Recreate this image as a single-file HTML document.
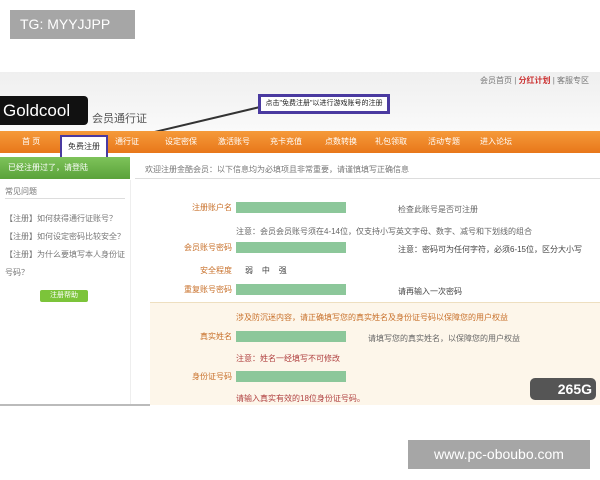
<!DOCTYPE html>
<html><head><meta charset="utf-8"><style>
*{margin:0;padding:0;box-sizing:border-box}
body{width:600px;height:480px;background:#fff;position:relative;overflow:hidden;font-family:"Liberation Sans","Noto Sans CJK SC",sans-serif;font-size:8px;color:#666}
.a{position:absolute;white-space:nowrap}
.g{position:absolute;background:#8cc79a;height:11px;width:110px}
.lab{position:absolute;color:#c8702a;font-size:8px;text-align:right;width:80px}
</style></head><body>
<div class="a" style="left:10px;top:10px;width:125px;height:29px;background:#a6a6a6;color:#fff;font-size:14px;line-height:29px;padding-left:10px">TG: MYYJJPP</div>
<div class="a" style="left:0;top:72px;width:600px;height:60px;background:linear-gradient(#efefef,#fafafa)"></div>
<div class="a" style="left:480px;top:75px;color:#777">会员首页 | <span style="color:#c33;font-weight:bold">分红计划</span> | 客服专区</div>
<div class="a" style="left:0;top:96px;width:88px;height:29px;background:#111;border-radius:0 4px 4px 0;color:#fff;font-size:17px;line-height:29px;padding-left:3px">Goldcool</div>
<div class="a" style="left:92px;top:110px;font-size:11px;color:#555">会员通行证</div>
<svg class="a" style="left:95px;top:105px" width="170" height="45"><line x1="165" y1="2" x2="30" y2="34" stroke="#333" stroke-width="2"/><polygon points="18,40 38,28 36,38" fill="#5a3ab0"/></svg>
<div class="a" style="left:258px;top:94px;width:132px;height:20px;background:#fff;border:3px solid #4a3aa0;font-size:7px;line-height:14px;color:#222;text-align:center;overflow:hidden">点击"免费注册"以进行游戏账号的注册</div>
<div class="a" style="left:0;top:131px;width:600px;height:22px;background:linear-gradient(#f59a3a,#e8771a);color:#fff;font-size:8px;line-height:22px">
<span class="a" style="left:22px">首 页</span><span class="a" style="left:115px">通行证</span><span class="a" style="left:165px">设定密保</span><span class="a" style="left:218px">激活账号</span><span class="a" style="left:270px">充卡充值</span><span class="a" style="left:325px">点数转换</span><span class="a" style="left:375px">礼包领取</span><span class="a" style="left:428px">活动专题</span><span class="a" style="left:480px">进入论坛</span></div>
<div class="a" style="left:60px;top:135px;width:48px;height:24px;background:#fff;border:2px solid #4a3aa0;text-align:center;line-height:20px;color:#333">免费注册</div>
<div class="a" style="left:0;top:157px;width:130px;height:22px;background:linear-gradient(#7ec35a,#5aa23a);color:#fff;line-height:22px;padding-left:8px">已经注册过了，请登陆</div>
<div class="a" style="left:135px;top:160px;width:465px;height:19px;border-bottom:1px solid #ddd;line-height:19px;padding-left:10px;color:#777">欢迎注册金酷会员：以下信息均为必填项且非常重要，请谨慎填写正确信息</div>
<div class="a" style="left:5px;top:186px;color:#777">常见问题</div>
<div class="a" style="left:5px;top:198px;width:120px;border-top:1px solid #ddd"></div>
<div class="a" style="left:5px;top:210px;color:#777;line-height:18px;white-space:normal;width:120px">【注册】如何获得通行证账号？<br>【注册】如何设定密码比较安全？<br>【注册】为什么要填写本人身份证号码？</div>
<div class="a" style="left:40px;top:290px;width:48px;height:12px;background:#7cc43a;border-radius:2px;color:#fff;font-size:7px;line-height:12px;text-align:center">注册帮助</div>
<div class="a" style="left:130px;top:180px;width:1px;height:225px;background:#eee"></div>
<div class="lab" style="left:152px;top:202px">注册账户名</div><div class="g" style="left:236px;top:202px"></div>
<div class="a" style="left:398px;top:204px">检查此账号是否可注册</div>
<div class="a" style="left:236px;top:226px">注意：会员会员账号须在4-14位，仅支持小写英文字母、数字、减号和下划线的组合</div>
<div class="lab" style="left:152px;top:242px">会员账号密码</div><div class="g" style="left:236px;top:242px"></div>
<div class="a" style="left:398px;top:244px;color:#444">注意：密码可为任何字符，必须6-15位，区分大小写</div>
<div class="lab" style="left:152px;top:265px">安全程度</div>
<div class="a" style="left:245px;top:265px;color:#444">弱 &nbsp;&nbsp; 中 &nbsp;&nbsp; 强</div>
<div class="lab" style="left:152px;top:284px">重复账号密码</div><div class="g" style="left:236px;top:284px"></div>
<div class="a" style="left:398px;top:286px;color:#444">请再输入一次密码</div>
<div class="a" style="left:150px;top:302px;width:450px;height:103px;background:#fdf6ea;border-top:1px solid #eedfc0"></div>
<div class="a" style="left:236px;top:312px;color:#c8702a">涉及防沉迷内容，请正确填写您的真实姓名及身份证号码以保障您的用户权益</div>
<div class="lab" style="left:152px;top:331px">真实姓名</div><div class="g" style="left:236px;top:331px"></div>
<div class="a" style="left:368px;top:333px">请填写您的真实姓名，以保障您的用户权益</div>
<div class="a" style="left:236px;top:353px;color:#b04040">注意：姓名一经填写不可修改</div>
<div class="lab" style="left:152px;top:371px">身份证号码</div><div class="g" style="left:236px;top:371px"></div>
<div class="a" style="left:236px;top:393px;color:#b04040">请输入真实有效的18位身份证号码。</div>
<div class="a" style="left:530px;top:378px;width:66px;height:22px;background:#555;border-radius:5px;color:#fff;font-weight:bold;font-size:14px;line-height:22px;text-align:right;padding-right:4px">265G</div>
<div class="a" style="left:0;top:404px;width:150px;height:2px;background:#bbb"></div>
<div class="a" style="left:408px;top:440px;width:182px;height:29px;background:#a6a6a6;color:#fff;font-size:14px;line-height:29px;text-align:center">www.pc-oboubo.com</div>
</body></html>
